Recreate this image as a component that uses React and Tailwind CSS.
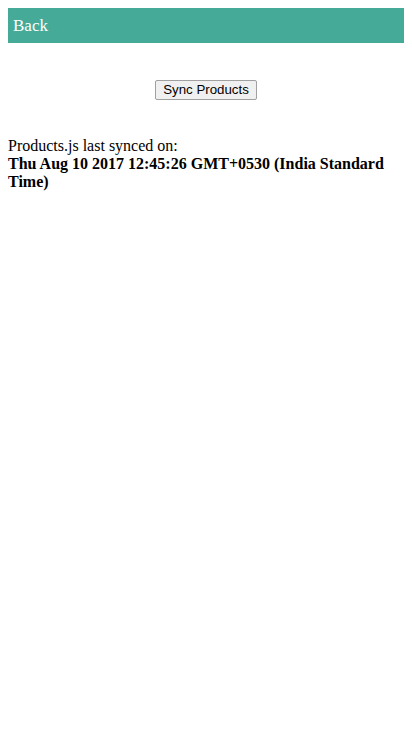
import React from 'react';

const App = () => {
  return (
    <div className="min-h-screen bg-white p-2 font-['Liberation_Serif',serif] text-black">
      <div className="h-[35px] bg-[#45aa98] flex items-center px-[5px]">
        <span className="text-white text-[17px]">Back</span>
      </div>
      <div className="flex justify-center mt-[37px]">
        <button className="h-[20px] px-[7px] border border-[#a0a0a0] bg-[#f0f0f0] rounded-[2px] font-['Liberation_Sans',sans-serif] text-[13.3px] leading-none text-black">
          Sync Products
        </button>
      </div>
      <div className="mt-[37px] text-[16px] leading-[18px]">
        <div>Products.js last synced on:</div>
        <div className="font-bold">Thu Aug 10 2017 12:45:26 GMT+0530 (India Standard Time)</div>
      </div>
    </div>
  );
};

export default App;
